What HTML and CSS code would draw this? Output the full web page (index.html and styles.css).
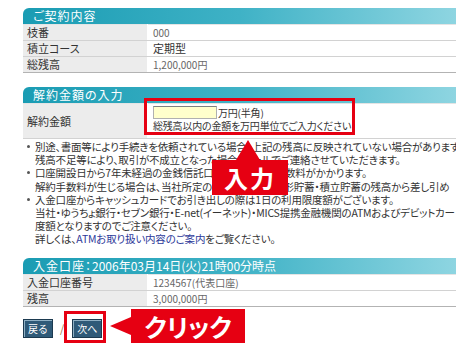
FILE: index.html
```html
<!DOCTYPE html>
<html lang="ja">
<head>
  <meta charset="UTF-8" />
  <title>解約金額の入力</title>
  <link rel="stylesheet" href="styles.css">
</head>
<body>
  <div class="page">
    <div class="box-title">ご契約内容</div>
    <table class="info">
      <tr><th>枝番</th><td class="num">000</td></tr>
      <tr><th>積立コース</th><td>定期型</td></tr>
      <tr class="last"><th>総残高</th><td class="num">1,200,000円</td></tr>
    </table>

    <div class="box-title">解約金額の入力</div>
    <table class="info input-table">
      <tr class="input-row">
        <th>解約金額</th>
        <td>
          <div class="input-line"><span class="amount"></span>万円(半角)</div>
          <div>総残高以内の金額を万円単位でご入力ください</div>
        </td>
      </tr>
    </table>

    <ul class="notes">
      <li>別途、書面等により手続きを依頼されている場合、上記の残高に反映されていない場合がありますの<br>残高不足等により、取引が不成立となった場合、メールでご連絡させていただきます。</li>
      <li>口座開設日から7年未経過の金銭信託口座の解約には手数料がかかります。<br>解約手数料が生じる場合は、当社所定の解約手数料を財形貯蓄・積立貯蓄の残高から差し引め</li>
      <li>入金口座からキャッシュカードでお引き出しの際は1日の利用限度額がございます。<br>当社・ゆうちょ銀行・セブン銀行・E-net(イーネット)・MICS提携金融機関のATMおよびデビットカードの<br>度額となりますのでご注意ください。<br>詳しくは、<a href="#">ATMお取り扱い内容のご案内</a>をご覧ください。</li>
    </ul>

    <div class="box-title">入金口座：<span class="date">2006年03月14日(火)21時00分時点</span></div>
    <table class="info">
      <tr><th>入金口座番号</th><td class="num">1234567(代表口座)</td></tr>
      <tr class="last"><th>残高</th><td class="num">3,000,000円</td></tr>
    </table>

    <div class="buttons">
      <button class="btn">戻る</button>
      <span class="slash">/</span>
      <button class="btn">次へ</button>
    </div>
  </div>

  <div class="mark mark-input"></div>
  <div class="callout callout-input">入力</div>

  <div class="mark mark-next"></div>
  <div class="callout callout-next">クリック</div>
</body>
</html>
```

FILE: styles.css
```css
body {
  margin: 0;
  overflow: hidden;
  font-family: "Noto Sans CJK JP", "Noto Sans", sans-serif;
  font-size: 11px;
  font-feature-settings: "palt";
  color: #333;
  background: #fff;
}

.page {
  width: 433px;
  padding: 8px 0 0 23px;
}

.box-title {
  height: 16px;
  line-height: 16px;
  padding-left: 10px;
  color: #fff;
  font-size: 12px;
  letter-spacing: 1px;
  border-top-left-radius: 6px;
  background: linear-gradient(to right, #1a9cb3, #3fb2c6 50%, #8ed5e1);
}

.date {
  letter-spacing: 0;
}

.info {
  width: 100%;
  border-collapse: collapse;
  border-top: 1px solid #e4e4e4;
  margin-bottom: 14px;
}

.info th {
  width: 116px;
  height: 15px;
  line-height: 15px;
  padding: 0 4px;
  text-align: left;
  font-weight: normal;
  background: #ececec;
  border-bottom: 1px solid #d2d2d2;
  border-right: 1px solid #fff;
}

.info td {
  padding: 0 5px;
  line-height: 15px;
  border-bottom: 1px solid #d2d2d2;
}

.info .num {
  color: #666;
  font-size: 10px;
}

.info .last th,
.info .last td {
  border-bottom-color: #b3b3b3;
}

.input-table {
  margin-bottom: 0;
}

.input-row th,
.input-row td {
  height: 31px;
}

.input-row td {
  padding-top: 0;
  padding-bottom: 3px;
  font-size: 10px;
  letter-spacing: -0.2px;
  line-height: 13px;
  vertical-align: top;
}

.input-line {
  display: flex;
  align-items: center;
  margin-top: 2px;
}

.amount {
  display: inline-block;
  width: 62px;
  height: 11px;
  background: #ffffcc;
  border: 1px solid #b0b0b0;
  border-top-color: #808080;
  margin-right: 1px;
}

.notes {
  margin: 1px 0 12px;
  padding: 0 0 0 12px;
  font-size: 10.5px;
  line-height: 13.2px;
  letter-spacing: -0.2px;
  white-space: nowrap;
  list-style: none;
}

.notes li {
  position: relative;
}

.notes li::before {
  content: "";
  position: absolute;
  left: -8px;
  top: 5px;
  width: 3px;
  height: 3px;
  border-radius: 50%;
  background: #555;
}

.notes a {
  color: #2d3a9a;
  text-decoration: none;
}

.buttons {
  display: flex;
  align-items: center;
  margin-top: -2px;
}

.btn {
  width: 30px;
  height: 19px;
  padding: 0;
  font-family: inherit;
  font-size: 10px;
  color: #fff;
  background: #2f5a78;
  border: 1px solid #1c3a50;
  box-shadow: inset 1px 1px 0 #8fb0c4;
}

.slash {
  margin: 0 8px 0 7px;
  color: #9a7040;
}

.mark {
  position: absolute;
  border: 3px solid #e60012;
}

.mark-input {
  left: 144px;
  top: 98px;
  width: 205px;
  height: 31px;
}

.mark-next {
  left: 64px;
  top: 311px;
  width: 36px;
  height: 26px;
}

.callout {
  position: absolute;
  background: #e60012;
  color: #fff;
  font-weight: bold;
  text-align: center;
}

.callout::before {
  content: "";
  position: absolute;
  border: solid transparent;
}

.callout-input {
  left: 212px;
  top: 160px;
  width: 76px;
  height: 35px;
  line-height: 35px;
  font-size: 24px;
  letter-spacing: 2px;
}

.callout-input::before {
  left: 24px;
  top: -20px;
  border-width: 0 12px 20px;
  border-bottom-color: #e60012;
}

.callout-next {
  left: 131px;
  top: 309px;
  width: 114px;
  height: 34px;
  line-height: 34px;
  font-size: 25px;
}

.callout-next::before {
  left: -21px;
  top: 8px;
  border-width: 9px 21px 9px 0;
  border-right-color: #e60012;
}
```
